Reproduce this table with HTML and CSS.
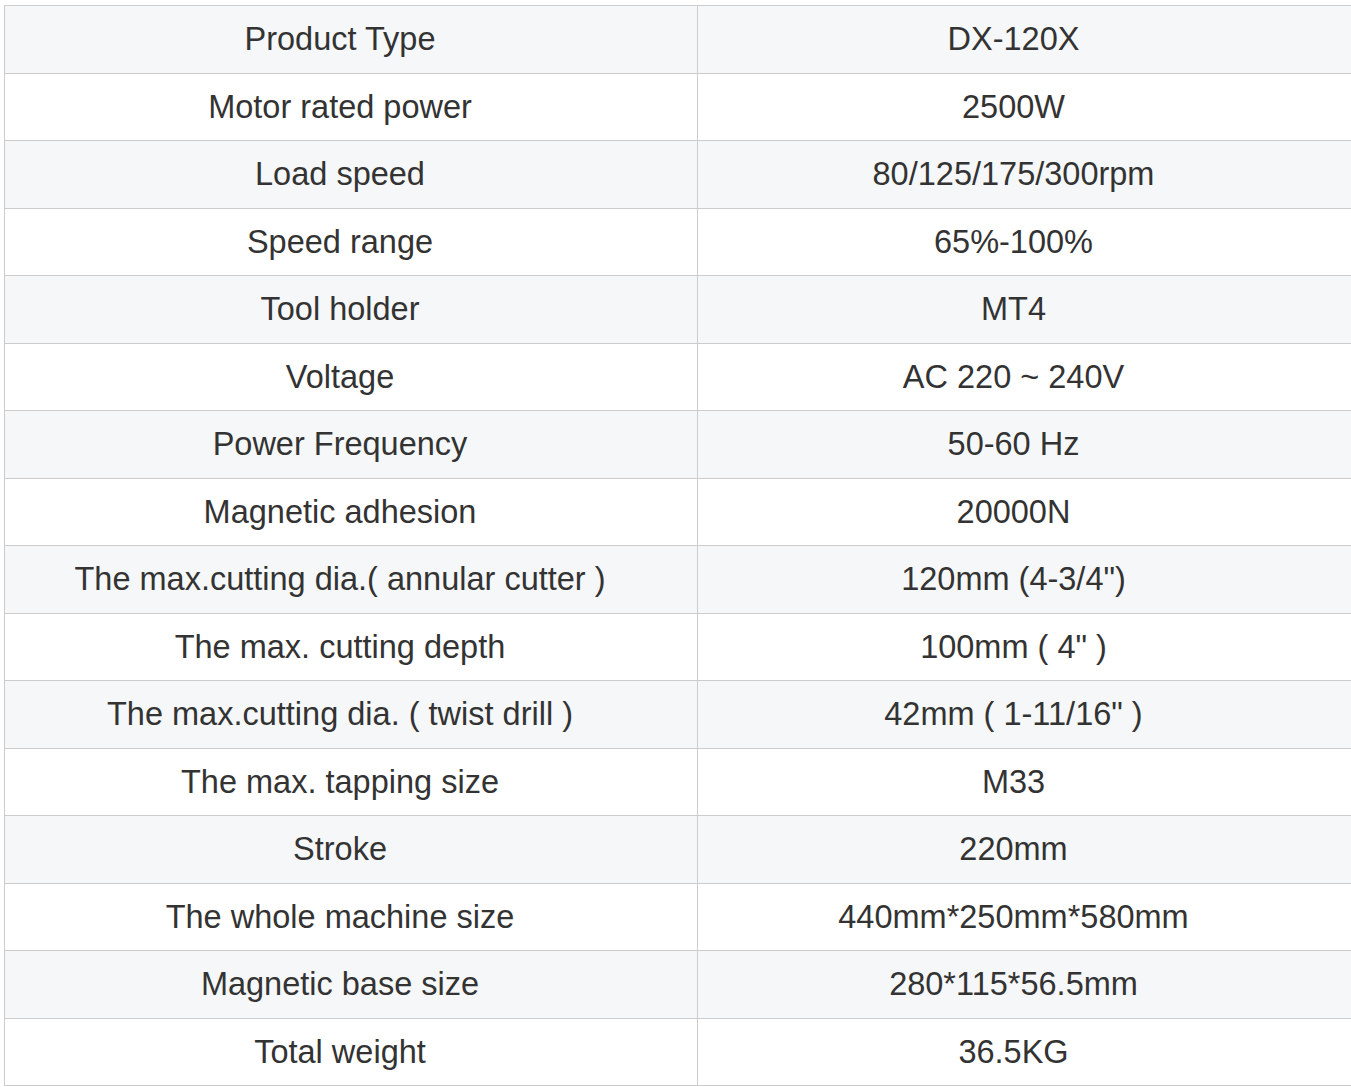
FILE: index.html
```html
<!DOCTYPE html>
<html lang="en">
<head>
<meta charset="utf-8">
<title>DX-120X Specifications</title>
<link rel="stylesheet" href="styles.css">
</head>
<body>
<table class="spec">
<tbody>
<tr><td>Product Type</td><td>DX-120X</td></tr>
<tr><td>Motor rated power</td><td>2500W</td></tr>
<tr><td>Load speed</td><td>80/125/175/300rpm</td></tr>
<tr><td>Speed range</td><td>65%-100%</td></tr>
<tr><td>Tool holder</td><td>MT4</td></tr>
<tr><td>Voltage</td><td>AC 220 ~ 240V</td></tr>
<tr><td>Power Frequency</td><td>50-60 Hz</td></tr>
<tr><td>Magnetic adhesion</td><td>20000N</td></tr>
<tr><td>The max.cutting dia.( annular cutter )</td><td>120mm (4-3/4")</td></tr>
<tr><td>The max. cutting depth</td><td>100mm ( 4" )</td></tr>
<tr><td>The max.cutting dia. ( twist drill )</td><td>42mm ( 1-11/16" )</td></tr>
<tr><td>The max. tapping size</td><td>M33</td></tr>
<tr><td>Stroke</td><td>220mm</td></tr>
<tr><td>The whole machine size</td><td>440mm*250mm*580mm</td></tr>
<tr><td>Magnetic base size</td><td>280*115*56.5mm</td></tr>
<tr><td>Total weight</td><td>36.5KG</td></tr>
</tbody>
</table>
</body>
</html>
```

FILE: styles.css
```css
html, body {
  margin: 0;
  padding: 0;
  background: #ffffff;
}
body {
  padding: 5px 0 0 4px;
  overflow: hidden;
}
.spec {
  border-collapse: collapse;
  width: 1380px;
  table-layout: fixed;
  font-family: "Liberation Sans", Arial, sans-serif;
  font-size: 32.5px;
  color: #333333;
}
.spec td {
  height: 66.5px;
  padding: 0 20px 0 0;
  text-align: center;
  vertical-align: middle;
  border: 1px solid #cccccc;
  line-height: 1;
}
.spec td:first-child {
  width: 670px;
  padding-right: 22px;
}
.spec td:last-child {
  padding-right: 54px;
}
.spec tr:nth-child(odd) td {
  background: #f6f7f8;
}
```
